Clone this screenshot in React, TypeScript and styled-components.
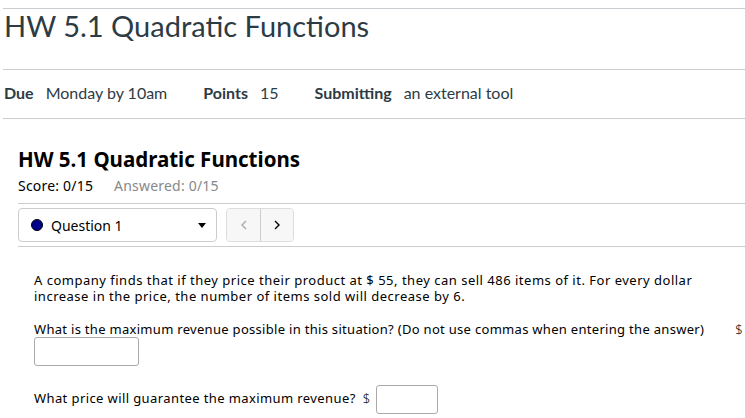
import React from 'react';
import styled, { createGlobalStyle } from 'styled-components';

const GlobalStyle = createGlobalStyle`
  body {
    margin: 0;
    background: #fff;
    font-family: Lato, "Liberation Sans", sans-serif;
    color: #2d3b45;
  }
`;

const Page = styled.div`
  padding: 8px 0 0 3px;
  overflow: hidden;
`;

const TitleBar = styled.div`
  border-top: 1px solid #c7cdd1;
  border-bottom: 1px solid #c7cdd1;
  height: 62px;
  box-sizing: border-box;
`;

const PageTitle = styled.h1`
  margin: 0;
  padding: 1px 0 0 1px;
  font-family: Lato, sans-serif;
  font-weight: 400;
  font-size: 29px;
  line-height: 32px;
  color: #2d3b45;
`;

const MetaRow = styled.ul`
  list-style: none;
  margin: 0;
  padding: 0 0 3px 1px;
  height: 49px;
  box-sizing: border-box;
  border-bottom: 1px solid #c7cdd1;
  display: flex;
  align-items: center;
  gap: 36px;
  font-size: 16px;
`;

const MetaItem = styled.li`
  display: flex;
  gap: 12px;
  b {
    font-weight: 700;
  }
`;

const Quiz = styled.div`
  padding: 27px 0 0 15px;
  font-family: "Noto Sans", "Open Sans", sans-serif;
  color: #000;
`;

const QuizTitle = styled.h2`
  margin: 0;
  font-size: 20.5px;
  font-weight: 700;
  line-height: 26px;
`;

const ScoreRow = styled.div`
  display: flex;
  gap: 21px;
  font-size: 14px;
  letter-spacing: 0.2px;
  line-height: 18px;
  margin-top: 5px;
`;

const Muted = styled.span`
  color: #888;
`;

const NavBar = styled.div`
  margin-top: 8px;
  border-top: 1px solid #ccc;
  border-bottom: 1px solid #ccc;
  padding: 4px 0 4px 0;
  display: flex;
  gap: 9px;
`;

const Select = styled.div`
  width: 199px;
  height: 34px;
  box-sizing: border-box;
  border: 1px solid #ccc;
  border-radius: 4px;
  display: flex;
  align-items: center;
  padding: 0 10px 0 12px;
  font-size: 14px;
`;

const Dot = styled.span<{ color: string }>`
  width: 10px;
  height: 10px;
  border-radius: 50%;
  background: ${({ color }) => color};
  border: 1px solid #000;
  margin-right: 8px;
`;

const Caret = styled.span`
  margin-left: auto;
  width: 0;
  height: 0;
  border-left: 4px solid transparent;
  border-right: 4px solid transparent;
  border-top: 5px solid #000;
`;

const NavGroup = styled.div`
  display: flex;
  border: 1px solid #ddd;
  border-radius: 4px;
  overflow: hidden;
  height: 34px;
  box-sizing: border-box;
`;

const NavButton = styled.button<{ disabled?: boolean }>`
  width: 33px;
  border: none;
  background: #f7f7f7;
  padding: 0;
  display: flex;
  align-items: center;
  justify-content: center;
  color: ${({ disabled }) => (disabled ? '#aaa' : '#000')};
  & + & {
    border-left: 1px solid #ccc;
  }
`;

const Question = styled.div`
  padding: 25px 0 0 16px;
  font-size: 13px;
  line-height: 16px;
  letter-spacing: 0.5px;
`;

const Para = styled.p<{ tight?: boolean }>`
  margin: 0 0 17px;
  letter-spacing: ${({ tight }) => (tight ? '0.3px' : 'inherit')};
`;

const Dollar = styled.span<{ gap: number }>`
  margin-left: ${({ gap }) => gap}px;
  font-weight: 300;
`;

const AnswerInput = styled.input<{ w: number }>`
  width: ${({ w }) => w}px;
  height: 29px;
  margin: 0 0 0 ${({ w }) => (w > 80 ? 0 : 5)}px;
  box-sizing: border-box;
  border: 1px solid #aaa;
  border-radius: 3px;
  vertical-align: middle;
  font: inherit;
`;

const LastPara = styled(Para)`
  margin-top: 19px;
  letter-spacing: 0.4px;
`;

const Chevron = ({ dir }: { dir: 'left' | 'right' }) => (
  <svg width="8" height="10" viewBox="0 0 8 10" fill="none" stroke="currentColor" strokeWidth="1.4">
    {dir === 'left' ? <path d="M6 1 2 5l4 4" /> : <path d="M2 1l4 4-4 4" />}
  </svg>
);

export default function App() {
  return (
    <>
      <GlobalStyle />
      <Page>
        <TitleBar>
          <PageTitle>HW 5.1 Quadratic Functions</PageTitle>
        </TitleBar>
        <MetaRow>
          <MetaItem>
            <b>Due</b>
            <span>Monday by 10am</span>
          </MetaItem>
          <MetaItem>
            <b>Points</b>
            <span>15</span>
          </MetaItem>
          <MetaItem>
            <b>Submitting</b>
            <span>an external tool</span>
          </MetaItem>
        </MetaRow>
        <Quiz>
          <QuizTitle>HW 5.1 Quadratic Functions</QuizTitle>
          <ScoreRow>
            <span>Score: 0/15</span>
            <Muted>Answered: 0/15</Muted>
          </ScoreRow>
          <NavBar>
            <Select>
              <Dot color="#00008b" />
              Question 1
              <Caret />
            </Select>
            <NavGroup>
              <NavButton disabled>
                <Chevron dir="left" />
              </NavButton>
              <NavButton>
                <Chevron dir="right" />
              </NavButton>
            </NavGroup>
          </NavBar>
          <Question>
            <Para>
              A company finds that if they price their product at $ 55, they can sell 486 items of it. For every
              dollar increase in the price, the number of items sold will decrease by 6.
            </Para>
            <Para tight>
              What is the maximum revenue possible in this situation? (Do not use commas when entering the answer)
              <Dollar gap={31}>$</Dollar> <AnswerInput w={105} />
            </Para>
            <LastPara>
              What price will guarantee the maximum revenue?
              <Dollar gap={7}>$</Dollar>
              <AnswerInput w={62} />
            </LastPara>
          </Question>
        </Quiz>
      </Page>
    </>
  );
}
